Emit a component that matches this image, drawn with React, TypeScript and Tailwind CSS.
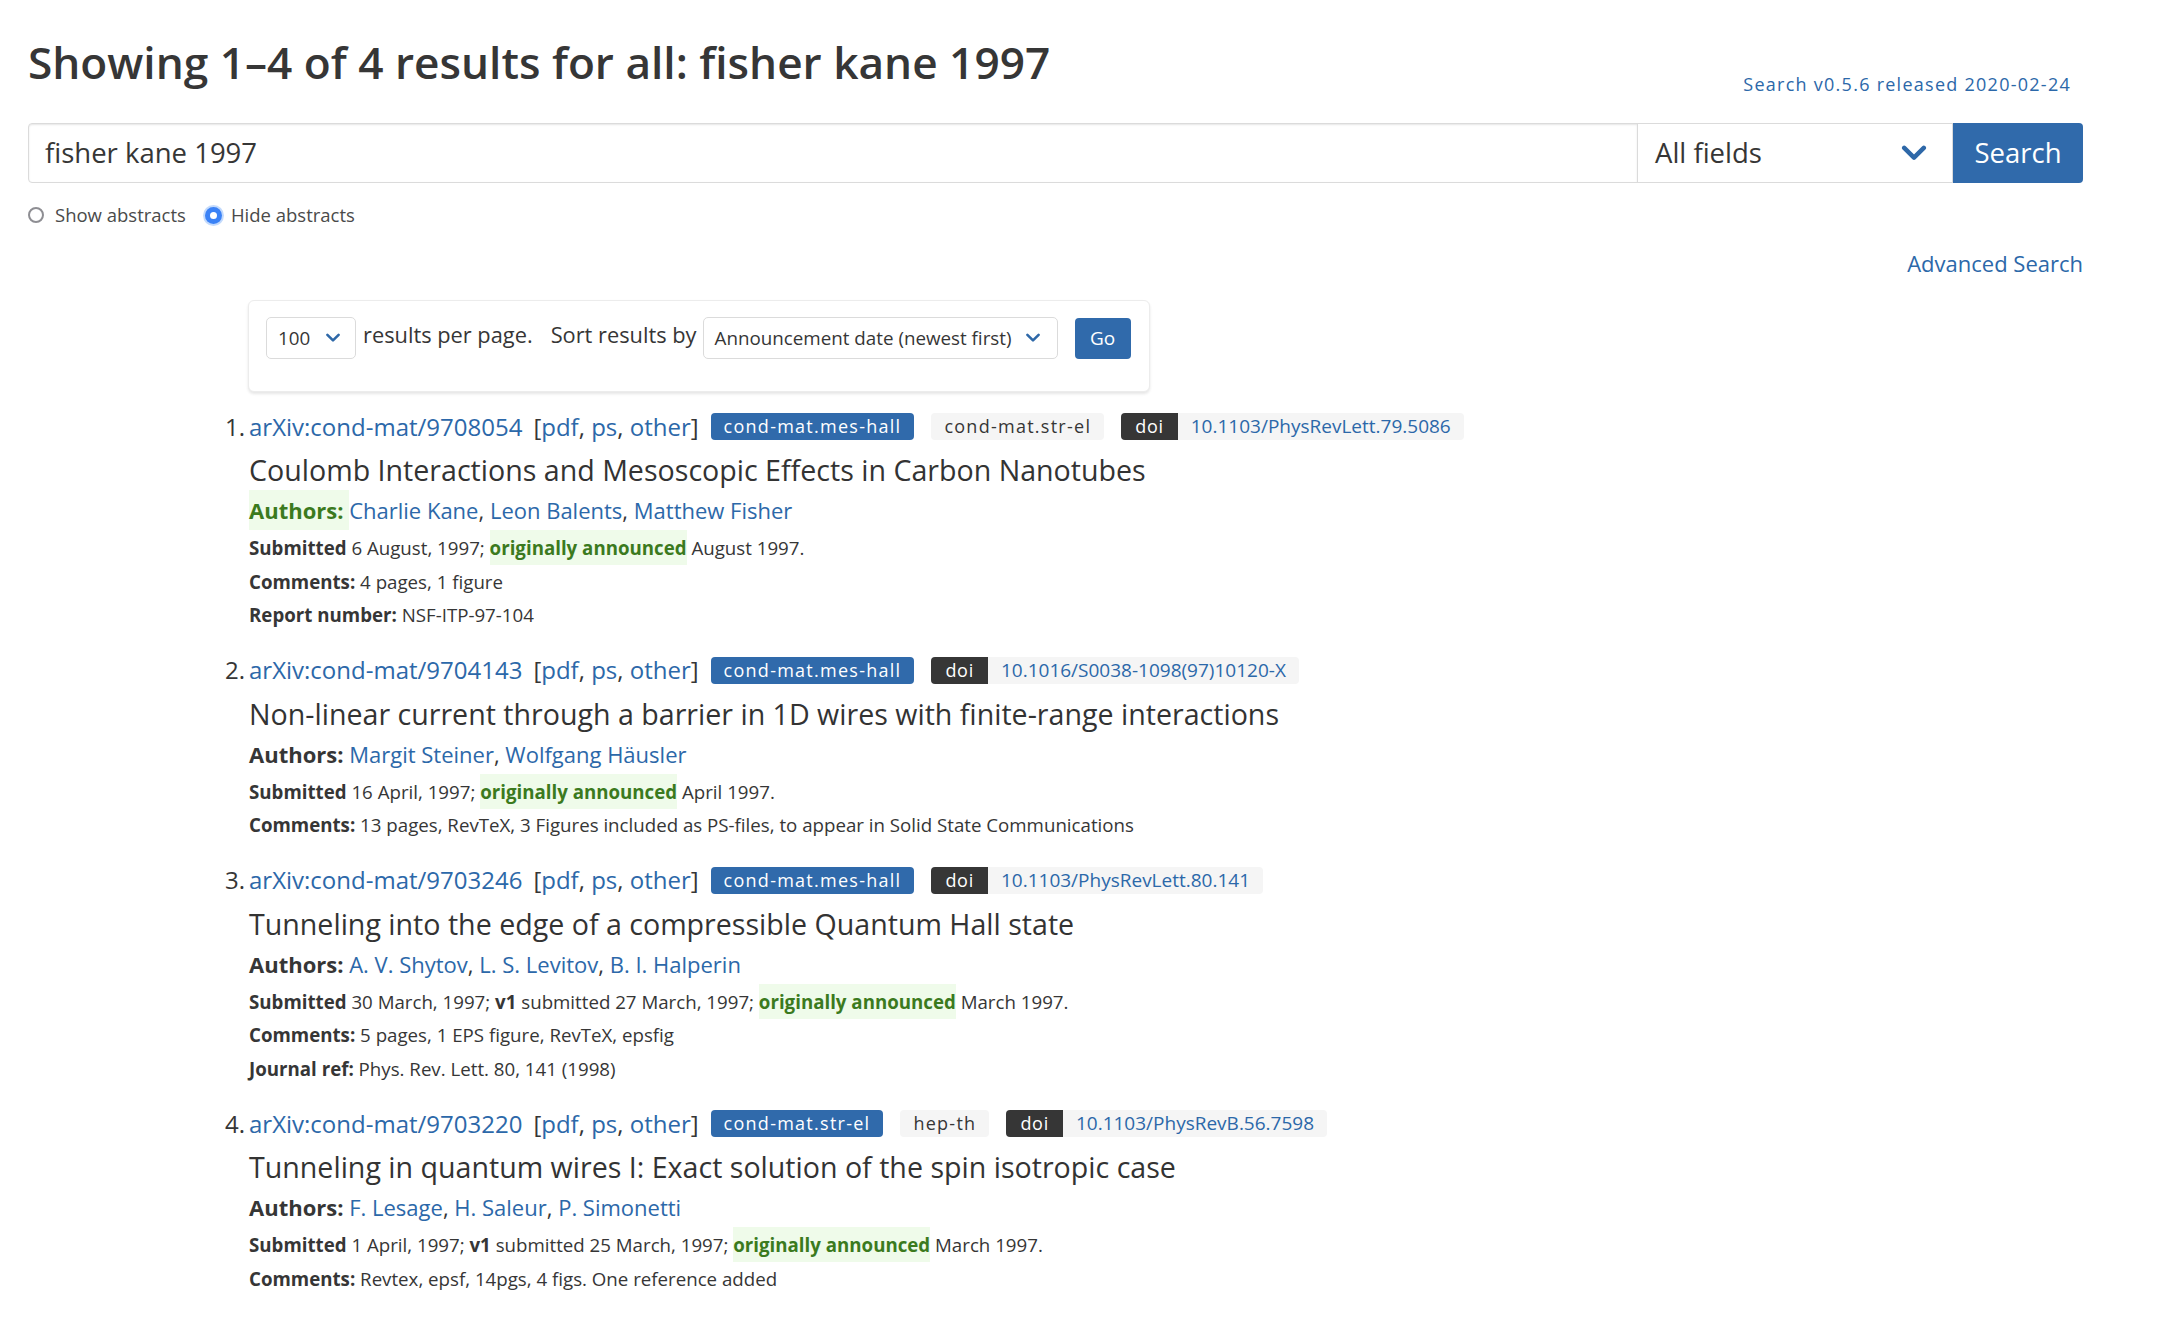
import React from "react";

type Tag = { label: string; primary?: boolean };
type Result = {
  n: number;
  id: string;
  tags: Tag[];
  doi: string;
  title: string;
  authors: string[];
  highlightAuthors?: boolean;
  submitted: string;
  v1?: string;
  announced: string;
  comments: string;
  extra?: { label: string; value: string };
};

const results: Result[] = [
  {
    n: 1,
    id: "arXiv:cond-mat/9708054",
    tags: [{ label: "cond-mat.mes-hall", primary: true }, { label: "cond-mat.str-el" }],
    doi: "10.1103/PhysRevLett.79.5086",
    title: "Coulomb Interactions and Mesoscopic Effects in Carbon Nanotubes",
    authors: ["Charlie Kane", "Leon Balents", "Matthew Fisher"],
    highlightAuthors: true,
    submitted: "6 August, 1997;",
    announced: "August 1997.",
    comments: "4 pages, 1 figure",
    extra: { label: "Report number:", value: "NSF-ITP-97-104" },
  },
  {
    n: 2,
    id: "arXiv:cond-mat/9704143",
    tags: [{ label: "cond-mat.mes-hall", primary: true }],
    doi: "10.1016/S0038-1098(97)10120-X",
    title: "Non-linear current through a barrier in 1D wires with finite-range interactions",
    authors: ["Margit Steiner", "Wolfgang Häusler"],
    submitted: "16 April, 1997;",
    announced: "April 1997.",
    comments: "13 pages, RevTeX, 3 Figures included as PS-files, to appear in Solid State Communications",
  },
  {
    n: 3,
    id: "arXiv:cond-mat/9703246",
    tags: [{ label: "cond-mat.mes-hall", primary: true }],
    doi: "10.1103/PhysRevLett.80.141",
    title: "Tunneling into the edge of a compressible Quantum Hall state",
    authors: ["A. V. Shytov", "L. S. Levitov", "B. I. Halperin"],
    submitted: "30 March, 1997;",
    v1: "submitted 27 March, 1997;",
    announced: "March 1997.",
    comments: "5 pages, 1 EPS figure, RevTeX, epsfig",
    extra: { label: "Journal ref:", value: "Phys. Rev. Lett. 80, 141 (1998)" },
  },
  {
    n: 4,
    id: "arXiv:cond-mat/9703220",
    tags: [{ label: "cond-mat.str-el", primary: true }, { label: "hep-th" }],
    doi: "10.1103/PhysRevB.56.7598",
    title: "Tunneling in quantum wires I: Exact solution of the spin isotropic case",
    authors: ["F. Lesage", "H. Saleur", "P. Simonetti"],
    submitted: "1 April, 1997;",
    v1: "submitted 25 March, 1997;",
    announced: "March 1997.",
    comments: "Revtex, epsf, 14pgs, 4 figs. One reference added",
  },
];

function Chevron({ className }: { className?: string }) {
  return (
    <svg viewBox="0 0 20 12" className={className} fill="none">
      <polyline points="3,2 10,9 17,2" stroke="#2e68a8" strokeWidth="3.2" strokeLinecap="round" strokeLinejoin="round" />
    </svg>
  );
}

function ResultItem({ r }: { r: Result }) {
  return (
    <li className="flex flex-col">
      <div className="flex items-center h-[45px] text-[24px] whitespace-nowrap">
        <span className="-ml-[40px] w-[40px] pr-[4px] text-right text-[#363636]">{r.n}.</span>
        <a className="text-[#2c68a9]">{r.id}</a>
        <span className="ml-[11px] text-[#363636]">
          [<a className="text-[#2c68a9]">pdf</a>, <a className="text-[#2c68a9]">ps</a>,{" "}
          <a className="text-[#2c68a9]">other</a>]
        </span>
        <div className="flex items-center gap-[17px] ml-[12px]">
          {r.tags.map((t) => (
            <span
              key={t.label}
              className={
                t.primary
                  ? "h-[27px] flex items-center px-[13px] rounded-[4px] text-[18px] tracking-[0.07em] bg-[#306aab] text-white"
                  : "h-[27px] flex items-center px-[13px] rounded-[4px] text-[18px] tracking-[0.07em] bg-[#f5f5f5] text-[#363636]"
              }
            >
              {t.label}
            </span>
          ))}
          <span className="h-[27px] flex items-stretch rounded-[4px] overflow-hidden">
            <span className="flex items-center px-[14px] bg-[#363636] text-white text-[18px] tracking-[0.04em]">doi</span>
            <span className="flex items-center px-[13px] bg-[#f5f5f5] text-[#2c68a9] text-[19px]">{r.doi}</span>
          </span>
        </div>
      </div>
      <p className="h-[41px] leading-[41px] text-[28.6px] font-medium text-[#333333] whitespace-nowrap">{r.title}</p>
      <p className="h-[41px] leading-[41px] text-[22px] text-[#363636] whitespace-nowrap">
        {r.highlightAuthors ? (
          <span className="font-bold text-[#3b7a1e] bg-[#effbea] py-[5px]">Authors: </span>
        ) : (
          <span className="font-bold">Authors: </span>
        )}
        {r.authors.map((a, i) => (
          <React.Fragment key={a}>
            <a className="text-[#2c68a9]">{a}</a>
            {i < r.authors.length - 1 ? ", " : ""}
          </React.Fragment>
        ))}
      </p>
      <p className="h-[33.5px] leading-[33.5px] text-[18.7px] text-[#363636] whitespace-nowrap">
        <span className="font-bold">Submitted</span> {r.submitted}{" "}
        {r.v1 ? (
          <>
            <span className="font-bold">v1</span> {r.v1}{" "}
          </>
        ) : null}
        <span className="font-bold text-[#3b7a1e] bg-[#effbea] py-[5px]">originally announced</span> {r.announced}
      </p>
      <p className="h-[33.5px] leading-[33.5px] text-[18.7px] text-[#363636] whitespace-nowrap">
        <span className="font-bold">Comments:</span> {r.comments}
      </p>
      {r.extra ? (
        <p className="h-[33.5px] leading-[33.5px] text-[18.7px] text-[#363636] whitespace-nowrap">
          <span className="font-bold">{r.extra.label}</span> {r.extra.value}
        </p>
      ) : null}
    </li>
  );
}

export default function App() {
  return (
    <div className="min-h-[1320px] bg-white font-['Open_Sans',sans-serif] text-[#363636] pl-[28px] pr-[89px] pt-[32px]">
      <div className="flex justify-between items-start">
        <h1 className="h-[60px] leading-[60px] text-[44.2px] font-semibold text-[#363636] whitespace-nowrap">
          Showing 1–4 of 4 results for all: fisher kane 1997
        </h1>
        <a className="mt-[40px] mr-[12px] h-[24px] leading-[24px] text-[18px] tracking-[0.07em] text-[#2c68a9] whitespace-nowrap">
          Search v0.5.6 released 2020-02-24
        </a>
      </div>

      <div className="mt-[27px] flex h-[60px]">
        <div className="flex-1 flex items-center border border-[#dbdbdb] rounded-l-[4px] shadow-[inset_0_1px_2px_rgba(10,10,10,0.1)] pl-[16px] text-[27.5px] text-[#363636]">
          fisher kane 1997
        </div>
        <div className="w-[316px] flex items-center justify-between border border-[#dbdbdb] -ml-px pl-[17px] pr-[24px] text-[27.5px] text-[#363636]">
          <span>All fields</span>
          <Chevron className="w-[28px] h-[17px]" />
        </div>
        <button className="w-[130px] bg-[#306aab] text-white text-[27.5px] rounded-r-[4px]">Search</button>
      </div>

      <div className="mt-[20px] h-[24px] flex items-center text-[18.5px] text-[#4a4a4a]">
        <span className="w-[16px] h-[16px] rounded-full border-2 border-[#8e8e93] bg-white" />
        <span className="ml-[11px]">Show abstracts</span>
        <span className="ml-[17px] w-[21px] h-[21px] rounded-full bg-[#c3dafc] flex items-center justify-center">
          <span className="w-[17px] h-[17px] rounded-full bg-[#3b82f6] flex items-center justify-center">
            <span className="w-[7px] h-[7px] rounded-full bg-white" />
          </span>
        </span>
        <span className="ml-[7px]">Hide abstracts</span>
      </div>

      <div className="mt-[21px] h-[30px] flex justify-end items-center">
        <a className="text-[22px] text-[#2c68a9]">Advanced Search</a>
      </div>

      <div className="mt-[22px] ml-[220px] w-[902px] h-[92px] bg-white rounded-[6px] border border-[#ececec] shadow-[0_2px_3px_rgba(10,10,10,0.1)] pl-[17px] pt-[16px]">
        <div className="flex items-center h-[42px] whitespace-nowrap">
          <div className="w-[90px] h-[42px] flex items-center justify-between border border-[#dbdbdb] rounded-[5px] pl-[11px] pr-[14px] text-[18.8px] text-[#363636]">
            <span>100</span>
            <Chevron className="w-[16px] h-[10px]" />
          </div>
          <span className="ml-[7px] text-[21.8px] -mt-[6px]">results per page.</span>
          <span className="ml-[18px] text-[21.8px] -mt-[6px]">Sort results by</span>
          <div className="ml-[6px] w-[355px] h-[42px] flex items-center justify-between border border-[#dbdbdb] rounded-[5px] pl-[11px] pr-[16px] text-[18.8px] text-[#363636]">
            <span>Announcement date (newest first)</span>
            <Chevron className="w-[16px] h-[10px]" />
          </div>
          <button className="ml-[17px] w-[56px] h-[41px] bg-[#306aab] text-white text-[19px] rounded-[4px]">Go</button>
        </div>
      </div>

      <ol className="mt-[12px] ml-[221px] flex flex-col gap-[16px]">
        {results.map((r) => (
          <ResultItem key={r.id} r={r} />
        ))}
      </ol>
    </div>
  );
}
